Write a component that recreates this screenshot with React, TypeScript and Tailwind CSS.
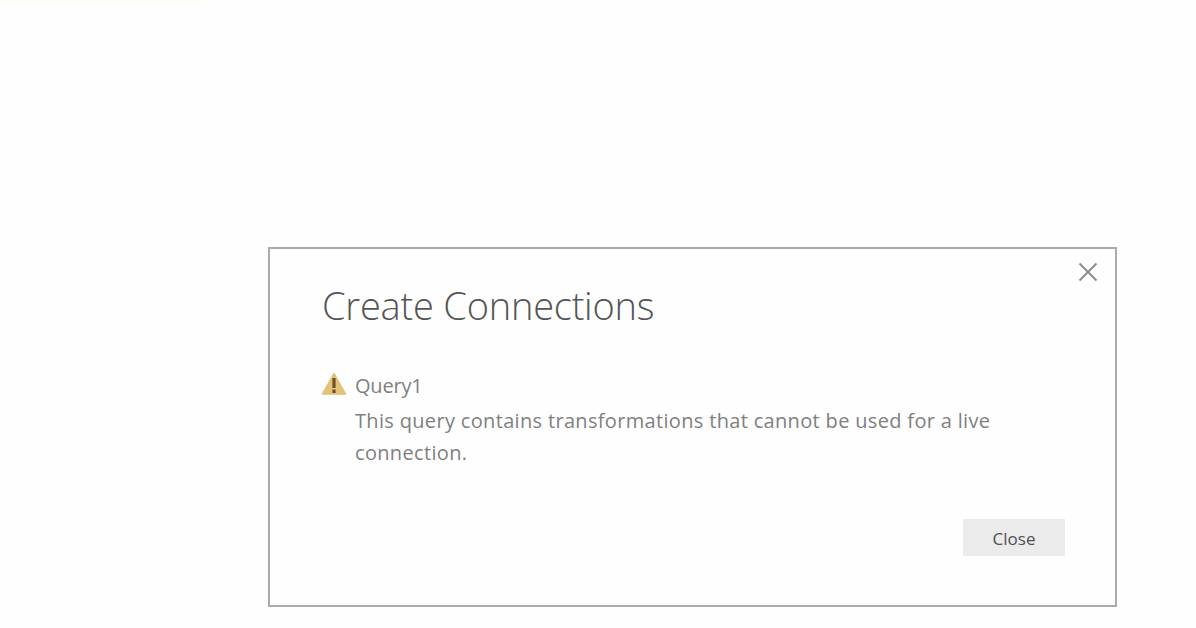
export default function App() {
  return (
    <div className="flex h-[628px] w-[1196px] flex-col overflow-hidden bg-[#fefefe] font-['Open_Sans','Noto_Sans',sans-serif]">
      <div className="h-[247px] shrink-0">
        <div className="h-[7px] w-[200px] bg-gradient-to-b from-[#fefdf3] to-[#fefefe]" />
      </div>
      <section
        role="dialog"
        className="ml-[268px] flex h-[360px] w-[849px] shrink-0 flex-col border-2 border-[#ababab] bg-[#fefefe] pl-[52px]"
      >
        <header className="flex h-[88px] justify-between">
          <h1 className="whitespace-nowrap pt-[32px] text-[38px] font-light leading-[48px] tracking-[-0.22px] text-[#555]">
            Create Connections
          </h1>
          <button aria-label="Close dialog" className="mr-[17px] mt-[13px] h-[20px] w-[20px]">
            <svg viewBox="0 0 20 20" className="h-5 w-5" fill="none" stroke="#888" strokeWidth="1.8">
              <path d="M1.5 1.5 18.5 18.5M18.5 1.5 1.5 18.5" />
            </svg>
          </button>
        </header>
        <div className="mt-[32px] flex h-[103px] text-[#808080]">
          <svg viewBox="0 0 26 24" className="-ml-px mt-[3px] h-[24px] w-[26px] shrink-0">
            <path d="M13 1.5 24.5 22H1.5Z" fill="#e6c177" stroke="#dcbf7d" strokeWidth="1.5" strokeLinejoin="round" />
            <path d="M13 6v10M13 17.5v3.5" stroke="#6a5628" strokeWidth="3.2" />
          </svg>
          <div className="ml-[8px] text-[20px] leading-[32px]">
            <p className="h-[36px] whitespace-nowrap pt-px leading-[32px] tracking-[-0.2px]">Query1</p>
            <p className="w-[660px] tracking-[0.33px]">
              <span className="block whitespace-nowrap">
                This query contains transformations that cannot be used for a live
              </span>
              connection.
            </p>
          </div>
        </div>
        <footer className="mt-[47px] flex justify-end pr-[50px]">
          <button className="h-[37px] w-[102px] bg-[#ebebeb] pt-[2px] text-[17px] leading-[34px] text-[#505050]">
            Close
          </button>
        </footer>
      </section>
    </div>
  );
}
